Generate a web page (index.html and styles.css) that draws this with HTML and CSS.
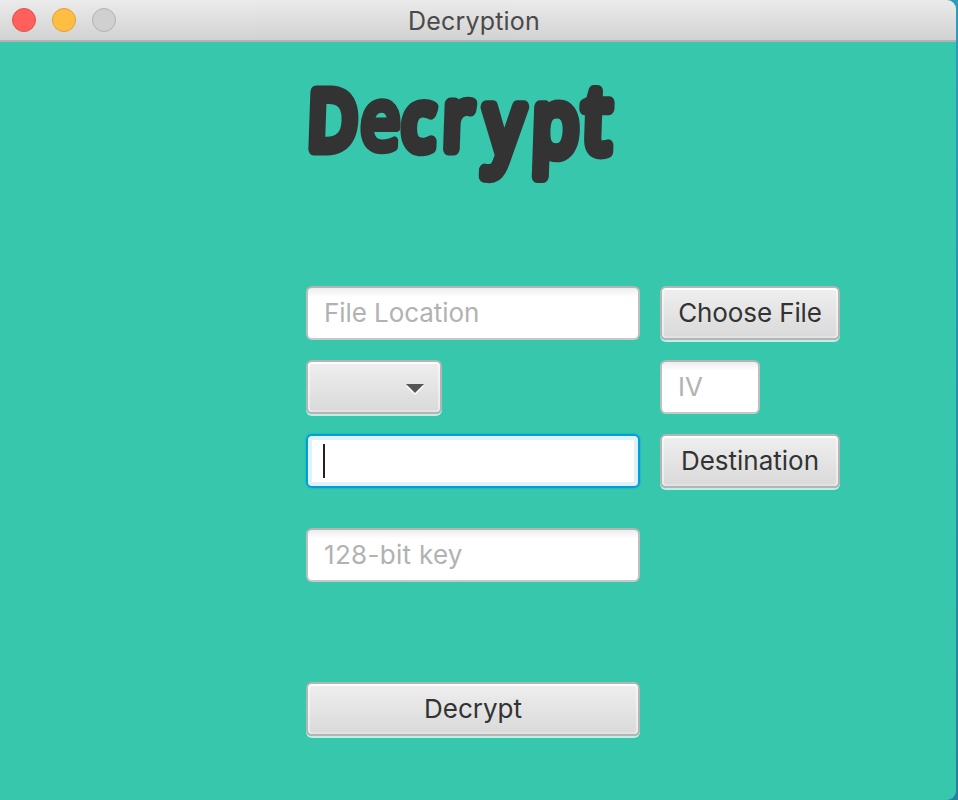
FILE: index.html
```html
<!DOCTYPE html>
<html lang="en">
<head>
<meta charset="utf-8">
<title>Decryption</title>
<link rel="stylesheet" href="styles.css">
</head>
<body>
<div class="window">
  <header class="titlebar">
    <div class="lights"><i class="light close"></i><i class="light minimize"></i><i class="light disabled"></i></div>
    <span class="title">Decryption</span>
  </header>
  <main class="content">
    <h1 class="heading">
      <svg width="320" height="110" viewBox="0 0 320 110"><text class="heading-text" transform="translate(3 0) skewX(-2) scale(.84 1)" y="72" x="1 63 113 162 212 268 328">D<tspan class="open">e</tspan>c<tspan class="arm">r</tspan><tspan class="deep" y="78">yp</tspan><tspan class="tall" y="75">t</tspan></text></svg>
    </h1>
    <form class="form">
      <div class="row">
        <div class="field wide"><span class="prompt">File Location</span></div>
        <button type="button" class="button side"><span class="choose">Choose File</span></button>
      </div>
      <div class="row">
        <div class="select-slot"><button type="button" class="button combo" aria-label="Algorithm"><svg width="20" height="12" viewBox="0 0 20 12"><path d="M1 3h18l-9 9z" fill="#fff"/><path d="M1 1h18l-9 9z" fill="#555"/></svg></button></div>
        <div class="field small"><span class="prompt">IV</span></div>
      </div>
      <div class="row">
        <div class="field wide focused"><span class="caret"></span></div>
        <button type="button" class="button side"><span class="dest">Destination</span></button>
      </div>
      <div class="row key-row"><div class="field wide"><span class="prompt key">128-bit key</span></div></div>
      <div class="row submit-row"><button type="button" class="button submit"><span class="submit-label">Decrypt</span></button></div>
    </form>
  </main>
</div>
</body>
</html>
```
FILE: styles.css
```css
* { box-sizing: border-box; }
body {
  margin: 0;
  width: 958px;
  height: 800px;
  overflow: hidden;
  background: linear-gradient(#2b9dbb, #287f9f);
  font-family: Inter, "Liberation Sans", sans-serif;
  font-size: 26px;
}
.window {
  width: 956px;
  height: 800px;
  border-radius: 0 9px 9px 0;
  overflow: hidden;
  background: #37c7ad;
}
.titlebar {
  display: grid;
  grid-template-columns: 128px 1fr 128px;
  align-items: center;
  height: 42px;
  padding-bottom: 1px;
  background: linear-gradient(#ebebeb, #d2d2d2);
  border-bottom: 2px solid #b3b3b1;
}
.lights { display: flex; gap: 16px; padding-left: 12px; }
.light { width: 24px; height: 24px; border-radius: 50%; border: 1px solid; }
.close { background: #ff605c; border-color: #e0504d; }
.minimize { background: #ffbe41; border-color: #dfa036; }
.disabled { background: #d0d0d0; border-color: #b2b2b2; }
.title {
  justify-self: center;
  margin-left: -8px;
  color: #4a4a4a;
  font-size: 25px;
  line-height: 36px;
  letter-spacing: .2px;
  padding-top: 2px;
}
.content { padding: 35px 0 0 306px; }
.heading { margin: 0; height: 209px; }
.heading svg { display: block; overflow: visible; }
.heading-text {
  font: 400 80px "Open Sans", sans-serif;
  fill: #333;
  stroke: #333;
  stroke-width: 13px;
  stroke-linejoin: round;
}
.open { font-size: 85px; stroke-width: 9px; }
.arm { font-size: 84px; }
.deep { font-size: 90px; }
.tall { font-size: 92px; }
.form { display: flex; flex-direction: column; gap: 20px; }
.row { display: flex; gap: 20px; height: 54px; }
.field {
  display: flex;
  align-items: center;
  height: 54px;
  padding: 0 0 2px 16px;
  border: 2px solid;
  border-color: #b4b4b4 #bebebe #c8c8c8;
  border-radius: 6px;
  background: linear-gradient(#ededed, #fff 9px);
  color: #b2b2b2;
}
.prompt { letter-spacing: -.06px; }
.key { letter-spacing: .3px; }
.wide { width: 334px; }
.small { width: 100px; }
.focused {
  border-color: #039ed3;
  background: linear-gradient(#f5f5f5, #fff 5px);
  box-shadow: inset 0 0 0 4px #dff2fa, 0 0 2px #039ed3;
  padding: 0 0 0 15px;
}
.caret { width: 2px; height: 34px; background: #222; }
.select-slot { width: 334px; }
.button {
  display: flex;
  align-items: center;
  justify-content: center;
  height: 54px;
  margin: 0;
  padding: 0 0 2px;
  border: 2px solid #b5b5b5;
  border-radius: 6px;
  background: linear-gradient(#efefef, #d9d9d9);
  box-shadow: inset 0 2px #fff, inset 2px 0 rgba(255,255,255,.45), inset -2px 0 rgba(255,255,255,.45), inset 0 -2px #e2e2e2, 0 2px rgba(255,255,255,.7);
  color: #333;
  font: 26px Inter, "Liberation Sans", sans-serif;
}
.choose { letter-spacing: -.1px; }
.side { width: 180px; }
.combo { width: 136px; justify-content: flex-end; padding: 4px 15px 0 0; }
.submit { width: 334px; }
.key-row { margin-top: 20px; }
.submit-row { margin-top: 80px; }
```
